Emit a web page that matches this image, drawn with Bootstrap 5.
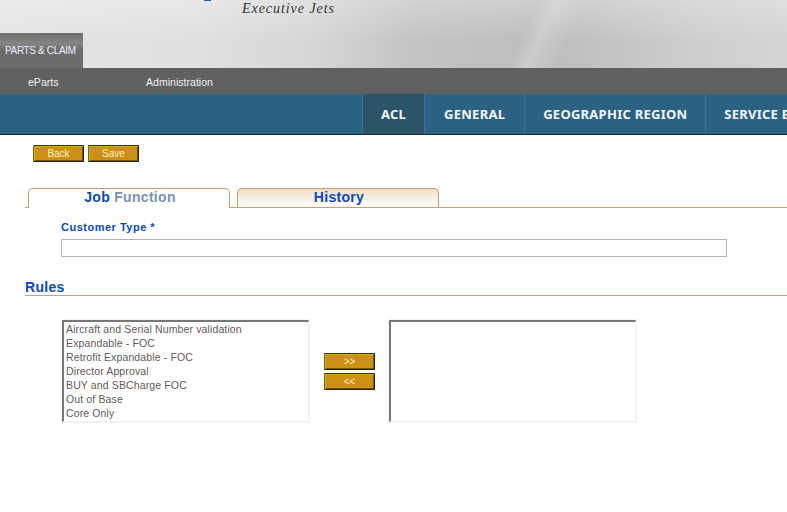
<!DOCTYPE html>
<html lang="en">
<head>
    <meta charset="UTF-8">
    <meta name="viewport" content="width=device-width, initial-scale=1.0">
    <title>Parts and Claim - Job Function</title>
    <link rel="stylesheet" href="https://cdn.jsdelivr.net/npm/bootstrap@5.3.0/dist/css/bootstrap.min.css">
    <style>
        html, body { height: 512px; overflow: hidden; }
        body {
            background: #fff;
            font-family: "Liberation Sans", Arial, sans-serif;
            font-size: 11px;
            color: #555;
        }
        .top-banner {
            height: 68px;
            background:
                linear-gradient(#1c5fae, #1c5fae) 204px 0 / 7px 1px no-repeat,
                linear-gradient(115deg, transparent 66%, rgba(255,255,255,.22) 68%, transparent 72%),
                linear-gradient(rgba(255,255,255,.25), transparent 60%),
                linear-gradient(90deg, #e4e4e4 0%, #e0e0e0 25%, #d6d6d6 40%, #c4c4c4 52%, #bdbdbd 70%, #cfcfcf 90%, #d4d4d4 100%);
        }
        .brand-line {
            font-family: "Liberation Serif", "Times New Roman", serif;
            font-style: italic;
            font-size: 14px;
            letter-spacing: .95px;
            line-height: 16px;
            color: #333;
            padding: 1px 0 0 242px;
        }
        .module-tab {
            width: 83px;
            height: 35px;
            background: linear-gradient(#6f6f6f 0%, #858585 30%, #6b6b6b 50%, #6e6e6e 100%);
            color: #eef;
            font-size: 10px;
            letter-spacing: -.35px;
            line-height: 35px;
            padding-left: 5px;
            white-space: nowrap;
        }
        .sub-bar {
            height: 26px;
            background: #606060;
            color: #f2f2f2;
            font-size: 10.5px;
            letter-spacing: .03px;
            line-height: 28px;
        }
        .sub-bar span:first-child { margin-left: 28px; width: 118px; }
        .blue-bar {
            height: 41px;
            background: #2b6282;
            border-bottom: 1px solid #222;
            padding-left: 362px;
            overflow: hidden;
        }
        .blue-item {
            font-family: "Noto Sans", sans-serif;
            font-weight: 700;
            font-size: 13px;
            letter-spacing: .25px;
            line-height: 40px;
            color: #f4f6f8;
            padding: 0 18px;
            border-left: 1px solid #3a7396;
            white-space: nowrap;
            flex: none;
        }
        .blue-item.on { background: #2a5468; }
        .blue-item.roomy { padding: 0 19px; }
        .gold-btn {
            width: 51px;
            height: 17px;
            padding: 0;
            font-size: 10px;
            line-height: 14px;
            color: #fbeecb;
            background: #cc9114;
            border: 1px solid #222;
            border-top-color: #333;
            border-left-color: #6b6b10;
            border-radius: 1px;
            box-shadow: inset 1px 1px 0 #c9b21c, inset -1px -1px 0 #7a5200;
        }
        .tool-row { padding: 10px 0 0 33px; gap: 4px; }
        .tab-strip {
            margin: 26px 0 0 25px;
            padding-left: 3px;
            height: 20px;
            border-bottom: 1px solid #cf9d6c;
        }
        .page-tab {
            height: 20px;
            border: 1px solid #cf9d6c;
            border-bottom: 0;
            border-radius: 5px 5px 0 0;
            text-align: center;
            font-size: 14px;
            font-weight: 700;
            line-height: 17px;
            letter-spacing: .3px;
            color: #0b4ab0;
            padding-left: 2px;
        }
        .page-tab.on { width: 202px; background: #fff; position: relative; z-index: 1; }
        .page-tab.on em { font-style: normal; color: #7d93ac; }
        .page-tab.off { width: 202px; margin-left: 7px; height: 19px; background: linear-gradient(#eedcc9, #fff); }
        .field-area { padding: 12px 0 0 61px; }
        .field-label { font-size: 11px; font-weight: 700; color: #0b4ab0; line-height: 14px; letter-spacing: .5px; }
        .text-field { width: 666px; height: 18px; border: 1px solid #b5b5b5; margin-top: 5px; display: block; border-radius: 0; padding: 0 3px; }
        .section-title {
            margin: 22px 0 0 25px;
            height: 17px;
            border-bottom: 1px solid #c9a27c;
            font-size: 14px;
            font-weight: 700;
            line-height: 17px;
            letter-spacing: .3px;
            color: #0b4ab0;
        }
        .rule-row { padding: 23px 0 0 61px; }
        .rule-box {
            width: 249px;
            height: 104px;
            border: 1px solid #f5f5f5;
        }
        .rule-list {
            height: 102px;
            border: 1px solid #f0f0f0;
            border-top: 2px solid #777;
            border-left: 2px solid #777;
            padding: 0 2px;
            line-height: 14px;
            font-size: 10.5px;
            letter-spacing: .13px;
            color: #5f5a5a;
        }
        .move-col { width: 78px; padding: 34px 0 0 14px; gap: 3px; }
    </style>
</head>
<body>
    <div class="top-banner d-flex flex-column justify-content-between">
        <div class="brand-line">Executive Jets</div>
        <div class="module-tab">PARTS &amp; CLAIM</div>
    </div>
    <div class="sub-bar d-flex">
        <span class="d-inline-block">eParts</span>
        <span>Administration</span>
    </div>
    <div class="blue-bar d-flex">
        <div class="blue-item on">ACL</div>
        <div class="blue-item roomy">GENERAL</div>
        <div class="blue-item">GEOGRAPHIC REGION</div>
        <div class="blue-item">SERVICE BULLETIN</div>
    </div>

    <div class="tool-row d-flex">
        <button type="button" class="btn gold-btn">Back</button>
        <button type="button" class="btn gold-btn">Save</button>
    </div>

    <div class="tab-strip d-flex">
        <div class="page-tab on">Job <em>Function</em></div>
        <div class="page-tab off">History</div>
    </div>

    <div class="field-area">
        <div class="field-label">Customer Type *</div>
        <input type="text" class="text-field">
    </div>

    <div class="section-title">Rules</div>

    <div class="rule-row d-flex">
        <div class="rule-box">
            <div class="rule-list">
                <div>Aircraft and Serial Number validation</div>
                <div>Expandable - FOC</div>
                <div>Retrofit Expandable - FOC</div>
                <div>Director Approval</div>
                <div>BUY and SBCharge FOC</div>
                <div>Out of Base</div>
                <div>Core Only</div>
            </div>
        </div>
        <div class="move-col d-flex flex-column">
            <button type="button" class="btn gold-btn">&gt;&gt;</button>
            <button type="button" class="btn gold-btn">&lt;&lt;</button>
        </div>
        <div class="rule-box">
            <div class="rule-list"></div>
        </div>
    </div>
    <script src="https://cdn.jsdelivr.net/npm/bootstrap@5.3.0/dist/js/bootstrap.bundle.min.js"></script>
</body>
</html>
